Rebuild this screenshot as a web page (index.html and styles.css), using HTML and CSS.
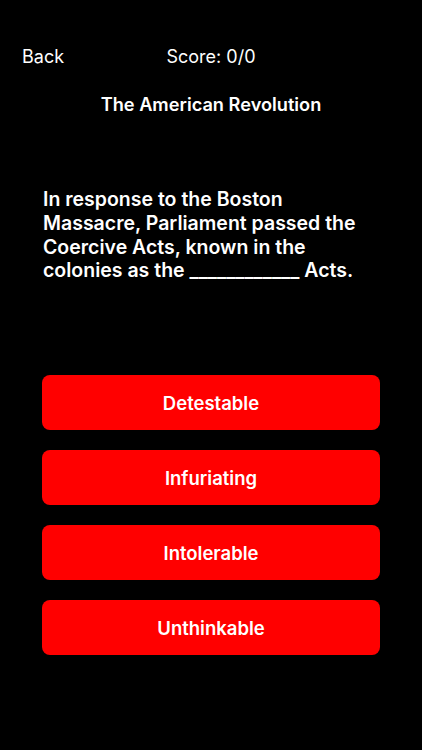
FILE: index.html
```html
<!DOCTYPE html>
<html lang="en">
<head>
<meta charset="utf-8">
<title>Quiz</title>
<link rel="stylesheet" href="styles.css">
</head>
<body>
<div class="screen">
  <header class="topbar">
    <span class="back">Back</span>
    <span class="score">Score: 0/0</span>
  </header>
  <h1 class="title">The American Revolution</h1>
  <p class="question">In response to the Boston Massacre, Parliament passed the Coercive Acts, known in the colonies as the ____________ Acts.</p>
  <div class="answers">
    <button class="answer">Detestable</button>
    <button class="answer">Infuriating</button>
    <button class="answer">Intolerable</button>
    <button class="answer">Unthinkable</button>
  </div>
</div>
</body>
</html>
```

FILE: styles.css
```css
html, body {
  margin: 0;
  padding: 0;
  background: #000;
}
.screen {
  width: 422px;
  height: 750px;
  background: #000;
  color: #fff;
  font-family: Inter, "Noto Sans", "Liberation Sans", sans-serif;
  display: flex;
  flex-direction: column;
}
.topbar {
  position: relative;
  height: 22px;
  margin-top: 46px;
  font-size: 18px;
  line-height: 22px;
  font-weight: 400;
}
.back {
  position: absolute;
  left: 22px;
  top: 0;
}
.score {
  display: block;
  text-align: center;
}
.title {
  margin: 25px 0 0;
  font-size: 18.2px;
  line-height: 22px;
  font-weight: 600;
  text-align: center;
}
.question {
  margin: 73px 0 0;
  padding: 0 43px;
  font-size: 19.5px;
  line-height: 23.8px;
  font-weight: 600;
}
.answers {
  margin: 92px 42px 0 42px;
  display: flex;
  flex-direction: column;
  gap: 20px;
}
.answer {
  height: 55px;
  border: none;
  border-radius: 8px;
  background: #ff0000;
  color: #fff;
  font-family: inherit;
  font-size: 18.5px;
  font-weight: 600;
  padding: 0;
}
```
